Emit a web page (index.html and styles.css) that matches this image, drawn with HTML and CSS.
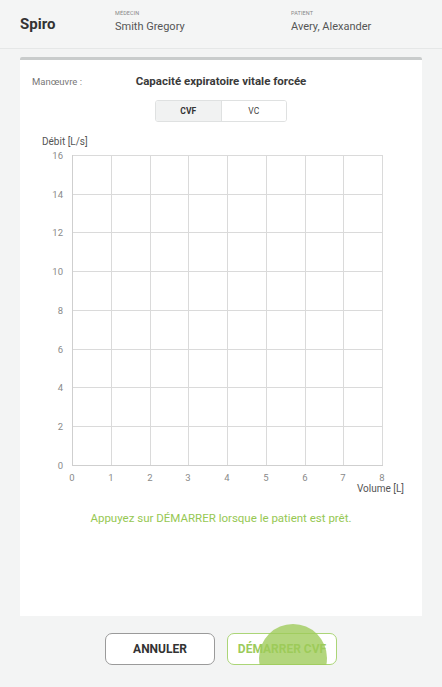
FILE: index.html
```html
<!DOCTYPE html>
<html lang="fr">
<head>
<meta charset="utf-8">
<title>Spiro</title>
<link rel="stylesheet" href="styles.css">
</head>
<body>
<header class="topbar">
  <div class="brand">Spiro</div>
  <div class="meta meta-doc">
    <div class="meta-label">MÉDECIN</div>
    <div class="meta-value">Smith Gregory</div>
  </div>
  <div class="meta">
    <div class="meta-label">PATIENT</div>
    <div class="meta-value">Avery, Alexander</div>
  </div>
</header>
<main class="content">
  <section class="card">
    <div class="maneuver-row">
      <div class="maneuver-label">Manœuvre :</div>
      <div class="maneuver-title">Capacité expiratoire vitale forcée</div>
      <div></div>
    </div>
    <div class="toggle">
      <div class="seg seg-active">CVF</div>
      <div class="seg">VC</div>
    </div>
    <svg class="chart" width="401" height="365" viewBox="0 0 401 365">
      <text class="axis-title" x="22" y="13">Débit [L/s]</text>
      <g class="grid">
        <line x1="91.5" y1="23" x2="91.5" y2="333"/>
        <line x1="130.5" y1="23" x2="130.5" y2="333"/>
        <line x1="168.5" y1="23" x2="168.5" y2="333"/>
        <line x1="207.5" y1="23" x2="207.5" y2="333"/>
        <line x1="246.5" y1="23" x2="246.5" y2="333"/>
        <line x1="285.5" y1="23" x2="285.5" y2="333"/>
        <line x1="323.5" y1="23" x2="323.5" y2="333"/>
        <line x1="362.5" y1="23" x2="362.5" y2="334"/>
        <line x1="52" y1="23.5" x2="363" y2="23.5"/>
        <line x1="52" y1="62.5" x2="363" y2="62.5"/>
        <line x1="52" y1="100.5" x2="363" y2="100.5"/>
        <line x1="52" y1="139.5" x2="363" y2="139.5"/>
        <line x1="52" y1="178.5" x2="363" y2="178.5"/>
        <line x1="52" y1="217.5" x2="363" y2="217.5"/>
        <line x1="52" y1="255.5" x2="363" y2="255.5"/>
        <line x1="52" y1="294.5" x2="363" y2="294.5"/>
      </g>
      <g class="axis">
        <line x1="52.5" y1="23" x2="52.5" y2="334"/>
        <line x1="52" y1="333.5" x2="363" y2="333.5"/>
      </g>
      <g class="ylabels">
        <text x="43" y="26.5">16</text>
        <text x="43" y="65.5">14</text>
        <text x="43" y="103.5">12</text>
        <text x="43" y="142.5">10</text>
        <text x="43" y="181.5">8</text>
        <text x="43" y="220.5">6</text>
        <text x="43" y="258.5">4</text>
        <text x="43" y="297.5">2</text>
        <text x="43" y="336.5">0</text>
      </g>
      <g class="xlabels">
        <text x="52" y="348.5">0</text>
        <text x="91" y="348.5">1</text>
        <text x="130" y="348.5">2</text>
        <text x="168" y="348.5">3</text>
        <text x="207" y="348.5">4</text>
        <text x="246" y="348.5">5</text>
        <text x="285" y="348.5">6</text>
        <text x="323" y="348.5">7</text>
        <text x="362" y="348.5">8</text>
      </g>
      <text class="axis-title x-title" x="384" y="360">Volume [L]</text>
    </svg>
    <p class="hint">Appuyez sur DÉMARRER lorsque le patient est prêt.</p>
  </section>
  <div class="actions">
    <button class="btn btn-cancel">ANNULER</button>
    <button class="btn btn-start">DÉMARRER CVF<span class="touch"></span></button>
  </div>
</main>
</body>
</html>
```

FILE: styles.css
```css
* { box-sizing: border-box; }
html, body {
  margin: 0;
  padding: 0;
  background: #f3f4f4;
  font-family: Roboto, "Liberation Sans", sans-serif;
  color: #333;
  overflow: hidden;
}
.topbar {
  height: 49px;
  display: flex;
  align-items: center;
  padding-left: 20px;
  border-bottom: 1px solid #e5e7e7;
  background: #f4f5f5;
}
.brand {
  width: 95px;
  font-size: 15px;
  font-weight: 700;
  color: #333;
}
.meta-doc { width: 176px; }
.meta-label {
  font-size: 5.5px;
  color: #888;
  letter-spacing: 0.1px;
  line-height: 7px;
  margin-top: -4px;
}
.meta-value {
  font-size: 11px;
  color: #555;
  line-height: 14px;
  margin-top: 3px;
}
.content {
  padding: 8px 20px 0 20px;
}
.card {
  height: 559px;
  background: #fff;
  border-top: 3px solid #c9cccc;
  border-radius: 2px 2px 0 0;
  padding-top: 13px;
}
.maneuver-row {
  display: grid;
  grid-template-columns: 1fr auto 1fr;
  align-items: center;
  height: 16px;
  padding-left: 12px;
}
.maneuver-label {
  font-size: 9.5px;
  color: #777;
}
.maneuver-title {
  font-size: 11.5px;
  font-weight: 700;
  color: #3a3a3a;
  margin-left: -12px;
}
.toggle {
  display: flex;
  width: 132px;
  height: 22px;
  margin: 11px auto 0;
  border: 1px solid #dfe1e1;
  border-radius: 3px;
  overflow: hidden;
}
.seg {
  flex: 1;
  display: flex;
  align-items: center;
  justify-content: center;
  font-size: 8.5px;
  color: #444;
  background: #fff;
}
.seg-active {
  background: #f1f2f2;
  font-weight: 700;
  color: #333;
  border-right: 1px solid #dfe1e1;
}
.chart {
  display: block;
  margin-top: 10px;
}
.grid line { stroke: #dadada; stroke-width: 1; }
.axis line { stroke: #cfcfcf; stroke-width: 1; }
.chart text {
  font-family: Roboto, "Liberation Sans", sans-serif;
  font-size: 9.5px;
}
.ylabels text { fill: #8a8a8a; text-anchor: end; }
.xlabels text { fill: #8a8a8a; text-anchor: middle; }
.chart .axis-title { fill: #555; font-size: 10px; }
.x-title { text-anchor: end; }
.hint {
  margin: 14px 0 0;
  text-align: center;
  font-size: 11.5px;
  line-height: 14px;
  color: #96c853;
}
.actions {
  display: flex;
  justify-content: center;
  gap: 12px;
  margin-top: 17px;
}
.btn {
  position: relative;
  width: 110px;
  height: 32px;
  border-radius: 7px;
  background: #fff;
  font-family: Roboto, "Liberation Sans", sans-serif;
  font-size: 12px;
  font-weight: 700;
  padding: 0;
}
.btn-cancel {
  border: 1.5px solid #9a9a9a;
  color: #333;
}
.btn-start {
  border: 1.5px solid #abd577;
  color: #9ccb5c;
}
.touch {
  position: absolute;
  left: 31px;
  top: -10px;
  width: 68px;
  height: 68px;
  border-radius: 50%;
  background: rgba(158, 203, 88, 0.78);
}
```
